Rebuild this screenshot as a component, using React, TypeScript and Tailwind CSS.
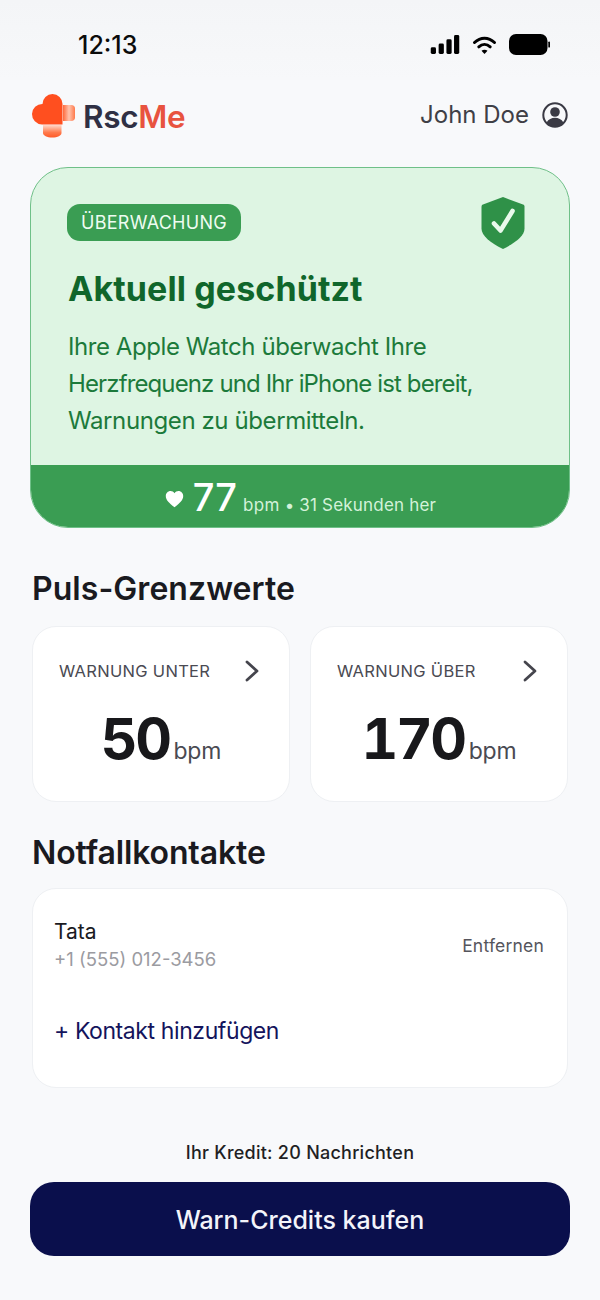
import React from 'react';

function Logo() {
    return (
        <svg width="46" height="46" viewBox="0 0 46 46" className="block">
            <defs>
                <linearGradient id="armRight" x1="0" y1="0" x2="1" y2="0">
                    <stop offset="0" stopColor="#ff6a3c" />
                    <stop offset="0.5" stopColor="#ffc4ae" />
                    <stop offset="1" stopColor="#ff7a4c" />
                </linearGradient>
                <linearGradient id="armDown" x1="0" y1="0" x2="0" y2="1">
                    <stop offset="0" stopColor="#ffd8ca" />
                    <stop offset="0.6" stopColor="#ff7a4c" />
                    <stop offset="1" stopColor="#ff5a28" />
                </linearGradient>
            </defs>
            <path d="M33 13h8.500c2 0 3.500 1.500 3.500 3.500v9c0 2-1.500 3.500-3.500 3.500H33z" fill="url(#armRight)" />
            <path d="M13 33h18.500v8c0 2.500-4 4.500-9.250 4.500S13 43.500 13 41z" fill="url(#armDown)" />
            <path d="M32.500 32.500V12A10 10 0 0 0 12.500 12A10.200 10.200 0 0 0 12 32.500z" fill="#ff4f1f" />
        </svg>
    );
}

function Chevron() {
    return (
        <svg width="16" height="22" viewBox="0 0 16 22" fill="none" stroke="#45454d" strokeWidth="2.8" strokeLinecap="round" strokeLinejoin="round">
            <path d="M3 2l10 9-10 9" />
        </svg>
    );
}

function LimitCard({ label, value }: { label: string; value: string }) {
    return (
        <div className="flex-1 h-[176px] bg-white rounded-[24px] border border-[#eef0f3] px-[26px] pt-[33px]">
            <div className="flex items-center justify-between pr-[3px]">
                <span className="text-[16.500px] leading-[22px] tracking-[0.3px] text-[#4a4a52]">{label}</span>
                <Chevron />
            </div>
            <div className="flex items-baseline justify-center mt-[23px] gap-[4px]">
                <span className="text-[57px] leading-[68px] font-bold tracking-[-2.500px] tabular-nums text-[#18181b]">{value}</span>
                <span className="text-[23px] leading-[28px] tracking-[-0.2px] text-[#4a4a52]">bpm</span>
            </div>
        </div>
    );
}

export default function App() {
    return (
        <div className="w-[600px] h-[1300px] overflow-hidden bg-[#f8f9fb] font-['Inter',sans-serif]">
            {/* Status bar */}
            <div className="h-[80px] bg-gradient-to-b from-[#f4f5f7] to-[#f7f8fa] flex items-start justify-between pl-[78px] pr-[50px] pt-[29px]">
                <span className="text-[25px] leading-[32px] font-medium text-[#0b0b0b]">12:13</span>
                <div className="flex items-center gap-[12px] pt-[5px]">
                    <svg width="30" height="19" viewBox="0 0 30 20" fill="#000">
                        <rect x="0" y="13" width="5.500" height="7" rx="1.500" />
                        <rect x="8.300" y="9" width="5.500" height="11" rx="1.500" />
                        <rect x="16.500" y="4.500" width="5.500" height="15.500" rx="1.500" />
                        <rect x="24.500" y="0" width="5.500" height="20" rx="1.500" />
                    </svg>
                    <svg width="25" height="20" viewBox="0 0 24 20" fill="none" stroke="#000" strokeWidth="3" strokeLinecap="round">
                        <path d="M2 7.500C8 1.800 16 1.800 22 7.500" />
                        <path d="M6.300 11.800c3.400-3 8-3 11.400 0" />
                        <path d="M12 19l-3-3.200c1.800-1.300 4.200-1.300 6 0z" fill="#000" stroke="none" />
                    </svg>
                    <svg width="41" height="21" viewBox="0 0 41 21" fill="#000">
                        <rect x="0" y="0" width="38.500" height="21" rx="7" />
                        <rect x="39.300" y="7.500" width="1.700" height="6" rx="0.850" />
                    </svg>
                </div>
            </div>

            {/* Header */}
            <div className="h-[72px] flex items-center justify-between pl-[30px] pr-[32px] pb-[2px]">
                <div className="flex items-center gap-[7px]">
                    <Logo />
                    <span className="text-[31.500px] leading-[36px] font-semibold tracking-[-0.3px] text-[#2f3044] mt-[3px]">
                        Rsc<span className="text-[#e8533f]">Me</span>
                    </span>
                </div>
                <div className="flex items-center gap-[13px]">
                    <span className="text-[24px] leading-[32px] text-[#3f3f46]">John Doe</span>
                    <svg width="26" height="26" viewBox="0 0 26 26">
                        <circle cx="13" cy="13" r="11.700" fill="none" stroke="#3a3a44" strokeWidth="2" />
                        <circle cx="13" cy="10" r="4.800" fill="#3a3a44" />
                        <path d="M4.600 20.500c1.800-3.200 5-4.700 8.400-4.700s6.600 1.500 8.400 4.700c-2 2.600-5 4.300-8.400 4.300s-6.400-1.700-8.400-4.300z" fill="#3a3a44" />
                    </svg>
                </div>
            </div>

            <div className="px-[30px] mt-[15px]">
                {/* Status card */}
                <div className="h-[361px] rounded-[38px] border-[1.500px] border-[#6fc088] bg-[#def5e3] overflow-hidden flex flex-col">
                    <div className="flex-1 pl-[36px] pr-[44px] pt-[36px]">
                        <div className="flex items-start justify-between">
                            <span className="h-[37px] w-[174px] rounded-[13px] bg-[#3a9d53] flex items-center justify-center text-[18px] tracking-[0.25px] text-[#eefcf1]">
                                ÜBERWACHUNG
                            </span>
                            <svg width="44" height="54" viewBox="0 0 44 54" className="-mt-[8px]">
                                <path d="M22 1l20 7.500c1 .4 1.500 1.200 1.500 2.200v22c0 7-9 14-21.500 20.300C9.500 46.700.500 39.700.500 32.700v-22c0-1 .500-1.800 1.500-2.200z" fill="#2f9148" />
                                <path d="M13 27.500l6.500 7L31.500 15" fill="none" stroke="#e9f9ec" strokeWidth="4.600" strokeLinecap="round" strokeLinejoin="round" />
                            </svg>
                        </div>
                        <h1 className="mt-[15px] ml-[1px] text-[34px] leading-[48px] font-bold tracking-[0.1px] text-[#10662b]">
                            Aktuell geschützt
                        </h1>
                        <p className="mt-[15px] ml-[1px] text-[24px] leading-[37px] text-[#1c7a3b]">
                            <span className="tracking-[-0.43px]">Ihre Apple Watch überwacht Ihre</span><br />
                            <span className="tracking-[-0.87px]">Herzfrequenz und Ihr iPhone ist bereit,</span><br />
                            <span className="tracking-[-0.4px]">Warnungen zu übermitteln.</span>
                        </p>
                    </div>
                    <div className="h-[62px] bg-[#3a9d53] flex items-center justify-center gap-[9px] pl-[1px]">
                        <svg width="19" height="18" viewBox="0 0 24 22" fill="#fff" className="mt-[6px]">
                            <path d="M12 21.500C5 16 1 12.300 1 7.300 1 3.800 3.700 1 7 1c2 0 3.900 1 5 2.800C13.100 2 15 1 17 1c3.300 0 6 2.800 6 6.300 0 5-4 8.700-11 14.200z" />
                        </svg>
                        <div className="flex items-baseline text-[#d4f2da] mt-[2px]">
                            <span className="text-[38px] leading-[46px] font-medium text-white">77</span>
                            <span className="ml-[6px] text-[17px] tracking-[0.35px]">bpm</span>
                            <span className="mx-[5px] text-[17px]">•</span>
                            <span className="text-[17px] tracking-[0.2px]">31 Sekunden her</span>
                        </div>
                    </div>
                </div>

                <h2 className="mt-[39px] pl-[2px] text-[32px] leading-[44px] font-semibold tracking-[0.05px] text-[#1a1a1f]">Puls-Grenzwerte</h2>
                <div className="mt-[15px] px-[2px] flex gap-[20px]">
                    <LimitCard label="WARNUNG UNTER" value="50" />
                    <LimitCard label="WARNUNG ÜBER" value="170" />
                </div>

                <h2 className="mt-[29px] pl-[2px] text-[32px] leading-[44px] font-semibold tracking-[-0.13px] text-[#1a1a1f]">Notfallkontakte</h2>

                {/* Contacts */}
                <div className="mx-[2px] mt-[13px] h-[200px] bg-white rounded-[24px] border border-[#eef0f3] pl-[21px] pr-[23px] pt-[30px]">
                    <div className="flex items-center justify-between">
                        <div>
                            <div className="text-[21px] leading-[26px] text-[#1a1a1f]">Tata</div>
                            <div className="text-[18.500px] leading-[29px] text-[#9b9ba1]">+1 (555) 012-3456</div>
                        </div>
                        <span className="text-[17.500px] tracking-[0.2px] text-[#55555c]">Entfernen</span>
                    </div>
                    <div className="mt-[41px] text-[23px] leading-[32px] tracking-[-0.4px] text-[#14145c]">+ Kontakt hinzufügen</div>
                </div>

                <p className="mt-[54px] text-center text-[18px] leading-[22px] font-medium tracking-[0.25px] text-[#1f1f24]">
                    Ihr Kredit: 20 Nachrichten
                </p>
                <button className="mt-[18px] w-full h-[74px] pt-[3px] rounded-[24px] bg-[#0a0f4c] text-[25px] font-medium text-[#f3f4fa]">
                    Warn-Credits kaufen
                </button>
            </div>
        </div>
    );
}
